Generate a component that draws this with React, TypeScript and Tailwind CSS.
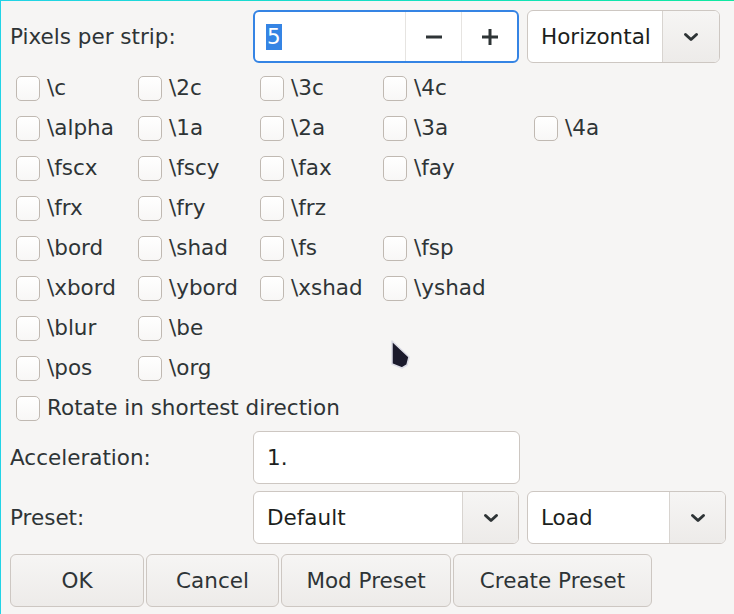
import React from 'react';

const rows: (string | null)[][] = [
  ['\\c', '\\2c', '\\3c', '\\4c', null],
  ['\\alpha', '\\1a', '\\2a', '\\3a', '\\4a'],
  ['\\fscx', '\\fscy', '\\fax', '\\fay', null],
  ['\\frx', '\\fry', '\\frz', null, null],
  ['\\bord', '\\shad', '\\fs', '\\fsp', null],
  ['\\xbord', '\\ybord', '\\xshad', '\\yshad', null],
  ['\\blur', '\\be', null, null, null],
  ['\\pos', '\\org', null, null, null],
];

const Chevron = () => (
  <svg width="16" height="10" viewBox="0 0 16 10" fill="none">
    <path d="M2.5 2.5 L8 7.5 L13.5 2.5" stroke="#2e3436" strokeWidth="3" strokeLinecap="round" strokeLinejoin="round" />
  </svg>
);

const Check = ({ label }: { label: string }) => (
  <div className="flex items-center h-[40px]">
    <span className="w-[24px] h-[25px] rounded-[5px] border border-[#c0b9b2] bg-gradient-to-b from-white to-[#f8f7f6] shrink-0" />
    <span className="ml-[7px] whitespace-nowrap">{label}</span>
  </div>
);

const Combo = ({ value, w, arrow }: { value: string; w: string; arrow: string }) => (
  <div className={`flex h-[53px] ${w} rounded-[6px] border border-[#cdc7c2] bg-white overflow-hidden`}>
    <div className="flex-1 flex items-center pl-[13px] pt-px text-[#1c1f20]">{value}</div>
    <div className={`${arrow} flex items-center justify-center border-l border-[#d8d4d0] bg-gradient-to-b from-[#f6f5f4] to-[#edebe9]`}>
      <Chevron />
    </div>
  </div>
);

const Btn = ({ label, w }: { label: string; w: string }) => (
  <button className={`${w} h-[53px] rounded-[6px] border border-[#cdc7c2] bg-gradient-to-b from-[#f6f5f4] to-[#edebe9] text-[#2e3436] pt-px`}>
    {label}
  </button>
);

const App = () => {
  return (
    <div className="relative w-[734px] h-[614px] bg-[#f6f5f4] border-l border-[#22d3e6] font-['DejaVu_Sans',sans-serif] text-[21.5px] text-[#2e3436] overflow-hidden">
      <div className="h-px bg-gradient-to-r from-[#22d3e6] to-[#10e8a0]" />

      {/* top row */}
      <div className="flex items-center pl-[9px] mt-[9px]">
        <div className="w-[243px] pt-px">Pixels per strip:</div>
        <div className="flex w-[266px] h-[53px] rounded-[6px] border-2 border-[#3584e4] bg-white overflow-hidden">
          <div className="flex-1 flex items-center pl-[11px]">
            <span className="bg-[#3584e4] text-white px-px leading-[26px]">5</span>
          </div>
          <div className="w-[56px] flex items-center justify-center border-l border-[#e6e4e1]">
            <svg width="18" height="18" viewBox="0 0 18 18"><path d="M1 9 H17" stroke="#2e3436" strokeWidth="3" /></svg>
          </div>
          <div className="w-[56px] flex items-center justify-center border-l border-[#e6e4e1]">
            <svg width="18" height="18" viewBox="0 0 18 18"><path d="M1 9 H17 M9 1 V17" stroke="#2e3436" strokeWidth="3" /></svg>
          </div>
        </div>
        <div className="ml-[8px]">
          <Combo value="Horizontal" w="w-[193px]" arrow="w-[57px]" />
        </div>
      </div>

      {/* tag checkboxes */}
      <div className="pl-[15px] mt-[5px]">
        {rows.map((r, i) => (
          <div key={i} className="grid grid-cols-[122px_122px_123px_151px_auto]">
            {r.map((l, j) => (l ? <Check key={j} label={l} /> : <div key={j} />))}
          </div>
        ))}
        <Check label="Rotate in shortest direction" />
      </div>

      <div className="flex items-center pl-[9px] mt-[3px]">
        <div className="w-[243px] pt-px">Acceleration:</div>
        <div className="w-[267px] h-[53px] rounded-[6px] border border-[#cdc7c2] bg-white flex items-center pl-[13px] pt-px text-[#1c1f20]">1.</div>
      </div>

      <div className="flex items-center pl-[9px] mt-[7px]">
        <div className="w-[243px] pt-px">Preset:</div>
        <Combo value="Default" w="w-[266px]" arrow="w-[56px]" />
        <div className="ml-[8px]">
          <Combo value="Load" w="w-[199px]" arrow="w-[56px]" />
        </div>
      </div>

      <div className="flex pl-[9px] mt-[10px] gap-[2px]">
        <Btn label="OK" w="w-[134px]" />
        <Btn label="Cancel" w="w-[133px]" />
        <Btn label="Mod Preset" w="w-[170px]" />
        <Btn label="Create Preset" w="w-[199px]" />
      </div>

      {/* mouse pointer */}
      <svg className="absolute left-[389px] top-[339px]" width="22" height="32" viewBox="0 0 22 32">
        <path d="M2 2 L19 18 L17 26 L12 29 L2 25 Z" fill="#1b1a2c" stroke="#dcdce6" strokeWidth="1.5" strokeLinejoin="round" />
      </svg>
    </div>
  );
};

export default App;
